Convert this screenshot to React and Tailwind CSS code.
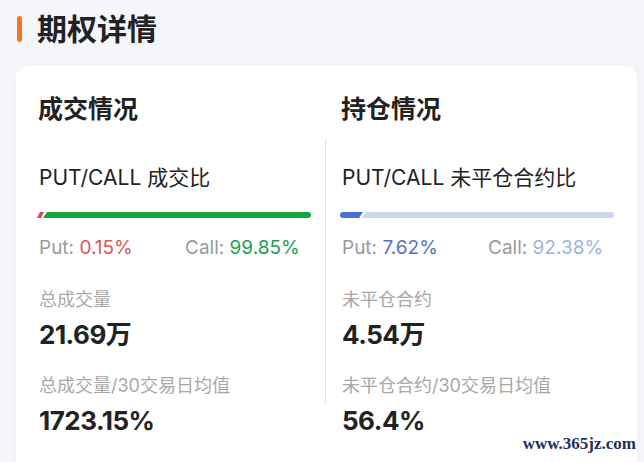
export default function App() {
  return (
    <div
      className="relative h-[462px] w-[644px] overflow-hidden bg-[#f5f6f9] pl-4 pr-[7px] pt-[11px]"
      style={{ fontFamily: '"Inter", "Noto Sans CJK SC", sans-serif' }}
    >
      {/* HEADER */}
      <div className="flex items-center">
        <span className="ml-[1px] h-[26px] w-[5px] rounded-full bg-[#f07a22]" />
        <h1 className="ml-[15px] text-[30px] font-bold leading-[36px] text-[#222]">期权详情</h1>
      </div>

      {/* CARD */}
      <div className="mt-[19px] h-[420px] rounded-[12px] bg-white px-[21px] pt-[28px] shadow-[0_0_6px_rgba(0,0,0,0.03)]">
        <div className="flex">
          <Column
            title="成交情况"
            ratioLabel="PUT/CALL 成交比"
            putColor="text-[#dc5656]"
            callColor="text-[#22a04f]"
            put="0.15%"
            call="99.85%"
            bar={
              <>
                <div className="h-[6px] w-[7px] bg-[#e04848] [clip-path:polygon(3px_0,100%_0,calc(100%-3px)_100%,0_100%)]" />
                <div className="-ml-[1px] h-[6px] flex-1 rounded-r-full bg-[#17a33f] [clip-path:polygon(4px_0,100%_0,100%_100%,0_100%)]" />
              </>
            }
            label1="总成交量"
            value1="21.69万"
            label2="总成交量/30交易日均值"
            value2="1723.15%"
          />

          {/* DIVIDER */}
          <div className="ml-[14px] mr-[14px] mt-[45px] h-[265px] w-px bg-[#e6e6e6]" />

          <Column
            title="持仓情况"
            ratioLabel="PUT/CALL 未平仓合约比"
            putColor="text-[#4f72cc]"
            callColor="text-[#9fb2dd]"
            put="7.62%"
            call="92.38%"
            bar={
              <>
                <div className="h-[6px] w-[23px] rounded-l-full bg-[#4a6fd8] [clip-path:polygon(0_0,100%_0,calc(100%-4px)_100%,0_100%)]" />
                <div className="-ml-[1px] h-[6px] flex-1 rounded-r-full bg-[#cdd8f0] [clip-path:polygon(4px_0,100%_0,100%_100%,0_100%)]" />
              </>
            }
            label1="未平仓合约"
            value1="4.54万"
            label2="未平仓合约/30交易日均值"
            value2="56.4%"
          />
        </div>
      </div>

      {/* WATERMARK */}
      <div
        className="absolute bottom-[8px] right-[8px] text-[17px] font-bold leading-[20px] text-[#1f2f5c]"
        style={{ fontFamily: '"Liberation Serif", serif' }}
      >
        www.365jz.com
      </div>
    </div>
  );
}

function Column({ title, ratioLabel, putColor, callColor, put, call, bar, label1, value1, label2, value2 }) {
  return (
    <div className="w-[274px] shrink-0">
      <h2 className="pl-[1px] text-[25px] font-bold leading-[30px] text-[#222]">{title}</h2>

      <p className="mt-[40px] pl-[2px] text-[21px] leading-[28px] text-[#222]">{ratioLabel}</p>

      <div className="mt-[20px] flex">{bar}</div>

      <div className="mt-[18px] flex pl-[2px] text-[19px] leading-[24px]">
        <span className="w-[146px] shrink-0 text-[#9a9a9a]">
          Put: <span className={putColor}>{put}</span>
        </span>
        <span className="text-[#9a9a9a]">
          Call: <span className={callColor}>{call}</span>
        </span>
      </div>

      <p className="mt-[28px] pl-[2px] text-[18px] leading-[24px] text-[#a8a8a8]">{label1}</p>
      <p className="mt-[6px] pl-[2px] text-[26px] font-bold leading-[34px] tracking-[-0.5px] text-[#222]">{value1}</p>

      <p className="mt-[22px] pl-[2px] text-[18px] leading-[24px] text-[#a8a8a8]">{label2}</p>
      <p className="mt-[6px] pl-[2px] text-[26px] font-bold leading-[34px] tracking-[-0.5px] text-[#222]">{value2}</p>
    </div>
  );
}
